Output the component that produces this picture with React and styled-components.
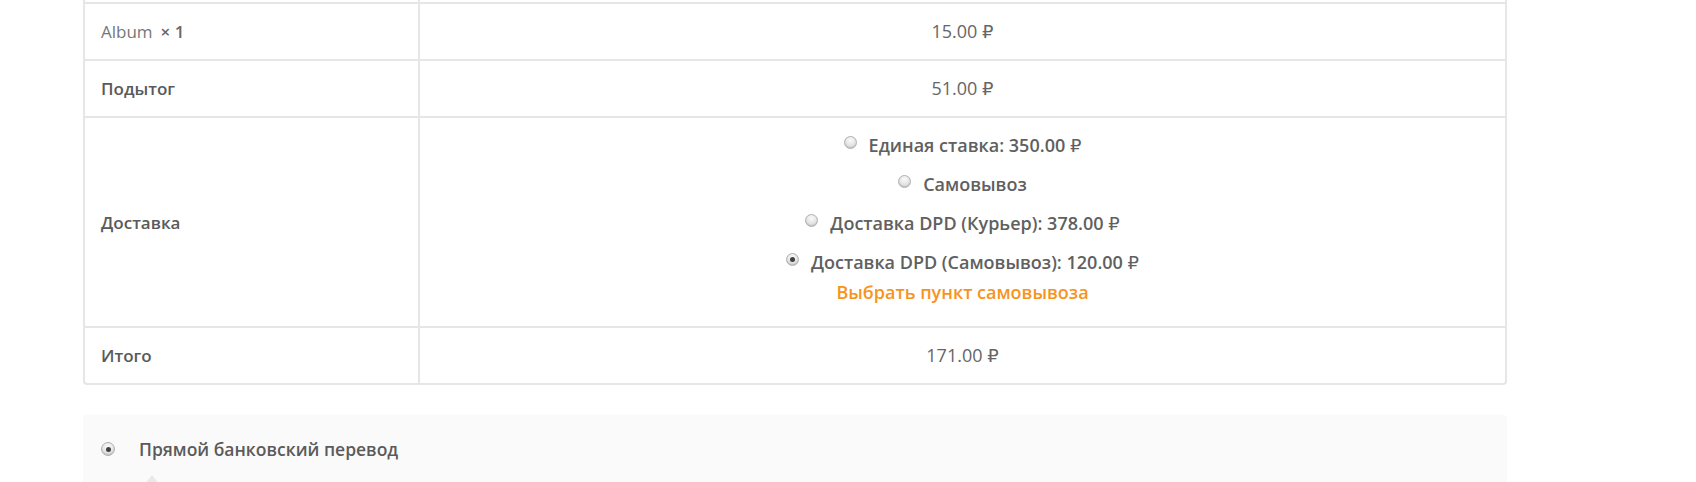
import React from 'react';
import styled, { createGlobalStyle, css } from 'styled-components';

const GlobalStyle = createGlobalStyle`
  html, body {
    margin: 0;
    padding: 0;
    background: #fff;
  }
  body {
    font-family: "Open Sans", "DejaVu Sans", sans-serif;
    font-size: 17px;
    color: #5b5b5b;
    overflow: hidden;
  }
`;

const Page = styled.div`
  width: 1424px;
  margin-left: 83px;
`;

const Table = styled.div`
  display: grid;
  grid-template-columns: 335px 1fr;
  border: 2px solid #e6e6e6;
  border-top: none;
  border-radius: 0 0 4px 4px;
`;

const TopEdge = styled.div`
  grid-column: 1 / -1;
  height: 2px;
  display: grid;
  grid-template-columns: 335px 1fr;
  & > span:first-child {
    border-right: 2px solid #e6e6e6;
  }
`;

const Cell = styled.div`
  border-top: 2px solid #e6e6e6;
  padding: 16px 16px;
  line-height: 23px;
  display: flex;
  align-items: center;
  ${(p) =>
    p.$label
      ? css`
          border-right: 2px solid #e6e6e6;
          font-weight: 600;
          color: #5a5a5a;
        `
      : css`
          justify-content: center;
          text-align: center;
          font-size: 18px;
          color: #666;
        `}
  ${(p) =>
    p.$plain &&
    css`
      font-weight: 400;
      color: #777;
    `}
`;

const Qty = styled.strong`
  font-weight: 600;
  color: #666;
  margin-left: 8px;
`;

const ShipList = styled.ul`
  list-style: none;
  margin: 0;
  padding: 0;
  display: flex;
  flex-direction: column;
  align-items: center;
  gap: 15px;
`;

const ShipItem = styled.li`
  display: flex;
  align-items: flex-start;
  gap: 12px;
  line-height: 24px;
  font-weight: 600;
  color: #606060;
`;

const Price = styled.span`
  font-weight: 600;
  & > small {
    font-size: inherit;
    font-weight: 400;
  }
`;

const ShipCell = styled(Cell)`
  flex-direction: column;
  padding: 15px 16px 22px;
`;

const PickupLink = styled.a`
  display: block;
  margin-top: 6px;
  line-height: 24px;
  color: #f7941d;
  font-weight: 600;
  text-decoration: none;
`;

const Radio = styled.span`
  flex: none;
  width: 13px;
  height: 13px;
  margin-top: 3px;
  border-radius: 50%;
  box-sizing: border-box;
  border: 1px solid #b0b0b0;
  background: radial-gradient(circle at 50% 30%, #fafafa 0%, #e4e4e4 55%, #c8c8c8 100%);
  box-shadow: inset 0 -1px 1px rgba(0, 0, 0, 0.1);
  display: flex;
  align-items: center;
  justify-content: center;
  &::after {
    content: '';
    width: 5px;
    height: 5px;
    border-radius: 50%;
    background: #404040;
    display: ${(p) => (p.$checked ? 'block' : 'none')};
  }
`;

const Payment = styled.div`
  margin-top: 30px;
  background: #fafafa;
  border-radius: 4px;
  padding: 22px 18px 0;
`;

const PayMethod = styled.label`
  display: flex;
  align-items: center;
  gap: 24px;
  line-height: 24px;
  font-size: 17.5px;
  font-weight: 600;
  color: #5b5b5b;
  & > span {
    margin-top: 0;
    width: 14px;
    height: 14px;
  }
`;

const PayBox = styled.div`
  position: relative;
  margin: 24px 0 0;
  height: 60px;
  background: #e9e9e9;
  border-radius: 2px;
  &::before {
    content: '';
    position: absolute;
    top: -10px;
    left: 43px;
    border-style: solid;
    border-color: transparent transparent #e9e9e9 transparent;
    border-width: 0 8px 10px 8px;
  }
`;

const shipping = [
  { label: 'Единая ставка:', price: '350.00' },
  { label: 'Самовывоз' },
  { label: 'Доставка DPD (Курьер):', price: '378.00' },
  { label: 'Доставка DPD (Самовывоз):', price: '120.00', checked: true },
];

export default function App() {
  return (
    <Page>
      <GlobalStyle />
      <Table>
        <TopEdge>
          <span />
          <span />
        </TopEdge>
        <Cell $label $plain>
          Album <Qty>× 1</Qty>
        </Cell>
        <Cell>15.00 ₽</Cell>

        <Cell $label>Подытог</Cell>
        <Cell>51.00 ₽</Cell>

        <Cell $label>Доставка</Cell>
        <ShipCell>
          <ShipList>
            {shipping.map((s) => (
              <ShipItem key={s.label}>
                <Radio $checked={s.checked} />
                <span>
                  {s.label}
                  {s.price && (
                    <Price>
                      {' '}
                      {s.price} <small>₽</small>
                    </Price>
                  )}
                </span>
              </ShipItem>
            ))}
          </ShipList>
          <PickupLink href="#">Выбрать пункт самовывоза</PickupLink>
        </ShipCell>

        <Cell $label>Итого</Cell>
        <Cell>171.00 ₽</Cell>
      </Table>

      <Payment>
        <PayMethod>
          <Radio $checked />
          Прямой банковский перевод
        </PayMethod>
        <PayBox />
      </Payment>
    </Page>
  );
}
